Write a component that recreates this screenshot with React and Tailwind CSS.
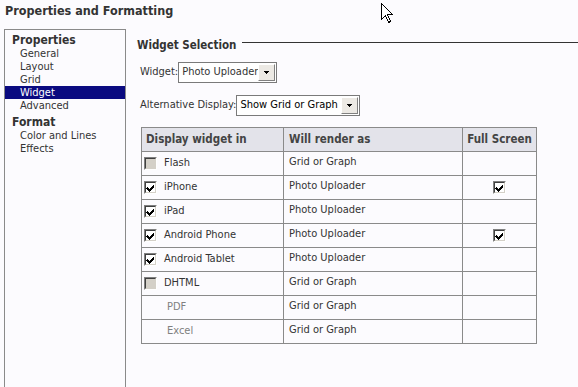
import React from "react";

const font = { fontFamily: '"DejaVu Sans Condensed", "DejaVu Sans", sans-serif' };

function Check({ checked, disabled }) {
  return (
    <div className="w-[13px] h-[13px] border-t border-l border-[#808080] border-b border-r border-b-white border-r-white">
      <div
        className={
          "w-[11px] h-[11px] border-t border-l border-[#404040] border-b border-r border-b-[#d4d0c8] border-r-[#d4d0c8] flex items-center justify-center " +
          (disabled ? "bg-[#d4d0c8]" : "bg-white")
        }
      >
        {checked && (
          <svg width="9" height="9" viewBox="0 0 9 9" shapeRendering="crispEdges">
            <path d="M1 4h1v1h1v1h1v-1h1v-1h1v-1h1v-1h1v3h-1v1h-1v1h-1v1h-1v1h-1v-1h-1v-1h-1v-1h-1z" fill="#000" />
          </svg>
        )}
      </div>
    </div>
  );
}

function Select({ width, text, dark }) {
  return (
    <div className={"h-[21px] border border-[#7a7a7a] bg-white flex items-center " + width}>
      <span
        className={
          "flex-1 pl-[3px] whitespace-nowrap overflow-hidden " +
          (dark ? "text-black" : "text-[#333]")
        }
      >
        {text}
      </span>
      <div className="w-[17px] h-[17px] mr-[1px] bg-[#ece9e4] border-t border-l border-white border-b border-r border-b-[#808080] border-r-[#808080] flex items-center justify-center">
        <svg width="5" height="3" viewBox="0 0 5 3" shapeRendering="crispEdges">
          <path d="M0 0h5v1h-1v1h-1v1h-1v-1h-1v-1h-1z" fill="#000" />
        </svg>
      </div>
    </div>
  );
}

const rows = [
  { name: "Flash", box: "off", render: "Grid or Graph", full: false },
  { name: "iPhone", box: "on", render: "Photo Uploader", full: true },
  { name: "iPad", box: "on", render: "Photo Uploader", full: false },
  { name: "Android Phone", box: "on", render: "Photo Uploader", full: true },
  { name: "Android Tablet", box: "on", render: "Photo Uploader", full: false },
  { name: "DHTML", box: "off", render: "Grid or Graph", full: false },
  { name: "PDF", box: null, render: "Grid or Graph", full: false },
  { name: "Excel", box: null, render: "Grid or Graph", full: false },
];

export default function App() {
  return (
    <div className="w-[578px] h-[387px] overflow-hidden bg-[#fcfbfe] text-[11px] text-[#333] relative" style={font}>
      <div className="h-[29px] pl-[5px] pt-[3px] text-[12.5px] font-bold text-[#333] leading-[16px]">
        Properties and Formatting
      </div>

      <div className="flex">
        {/* left nav */}
        <div className="ml-[4px] w-[122px] h-[400px] border border-[#8a8a8a] pt-[4px] leading-[13px]">
          <div className="pl-[7px] font-bold text-[12px]">Properties</div>
          <div className="pl-[15px]">General</div>
          <div className="pl-[15px]">Layout</div>
          <div className="pl-[15px]">Grid</div>
          <div className="pl-[15px] bg-[#0a0a80] text-white">Widget</div>
          <div className="pl-[15px]">Advanced</div>
          <div className="pl-[7px] mt-[4px] font-bold text-[12px]">Format</div>
          <div className="pl-[15px]">Color and Lines</div>
          <div className="pl-[15px]">Effects</div>
        </div>

        {/* content */}
        <div className="flex-1 pl-[11px] pt-[10px]">
          <div className="flex items-center h-[14px]">
            <span className="font-bold text-[11.5px]">Widget Selection</span>
            <div className="flex-1 h-px bg-[#333] ml-[6px] -mt-[8px]" />
          </div>

          <div className="flex items-center mt-[9px] pl-[3px]">
            <span>Widget:</span>
            <Select width="w-[99px]" text="Photo Uploader" />
          </div>

          <div className="flex items-center mt-[12px] pl-[3px]">
            <span>Alternative Display:</span>
            <Select width="w-[124px]" text="Show Grid or Graph" dark />
          </div>

          <table className="mt-[11px] ml-[4px] w-[396px] border-collapse">
            <thead>
              <tr className="h-[24px] bg-[#e3e3ea] text-[#444] font-bold text-[11.5px]">
                <th className="w-[142px] border border-[#8a8a8a] text-left pl-[4px] font-bold">Display widget in</th>
                <th className="w-[179px] border border-[#8a8a8a] text-left pl-[5px] font-bold">Will render as</th>
                <th className="border border-[#8a8a8a] text-center font-bold">Full Screen</th>
              </tr>
            </thead>
            <tbody>
              {rows.map((r) => (
                <tr key={r.name} className="h-[24px]">
                  <td className="border border-[#8a8a8a] pl-[2px]">
                    <div className="flex items-center">
                      {r.box ? (
                        <Check checked={r.box === "on"} disabled={r.box === "off"} />
                      ) : (
                        <div className="w-[15px]" />
                      )}
                      <span className={"ml-[7px] " + (r.box ? "" : "text-[#808080] pl-[1px]")}>{r.name}</span>
                    </div>
                  </td>
                  <td className="border border-[#8a8a8a] pl-[5px] pb-[2px]">{r.render}</td>
                  <td className="border border-[#8a8a8a]">
                    {r.full && (
                      <div className="flex justify-center">
                        <Check checked />
                      </div>
                    )}
                  </td>
                </tr>
              ))}
            </tbody>
          </table>
        </div>
      </div>

      {/* mouse cursor */}
      <svg className="absolute left-[381px] top-[3px]" width="13" height="21" viewBox="0 0 13 21" shapeRendering="crispEdges">
        <path d="M0.5 0.5 L0.5 16.5 L4.5 12.5 L7.5 19.5 L9.5 18.5 L6.5 11.5 L11.5 11.5 Z" fill="#fff" stroke="#000" strokeWidth="1" />
      </svg>
    </div>
  );
}
